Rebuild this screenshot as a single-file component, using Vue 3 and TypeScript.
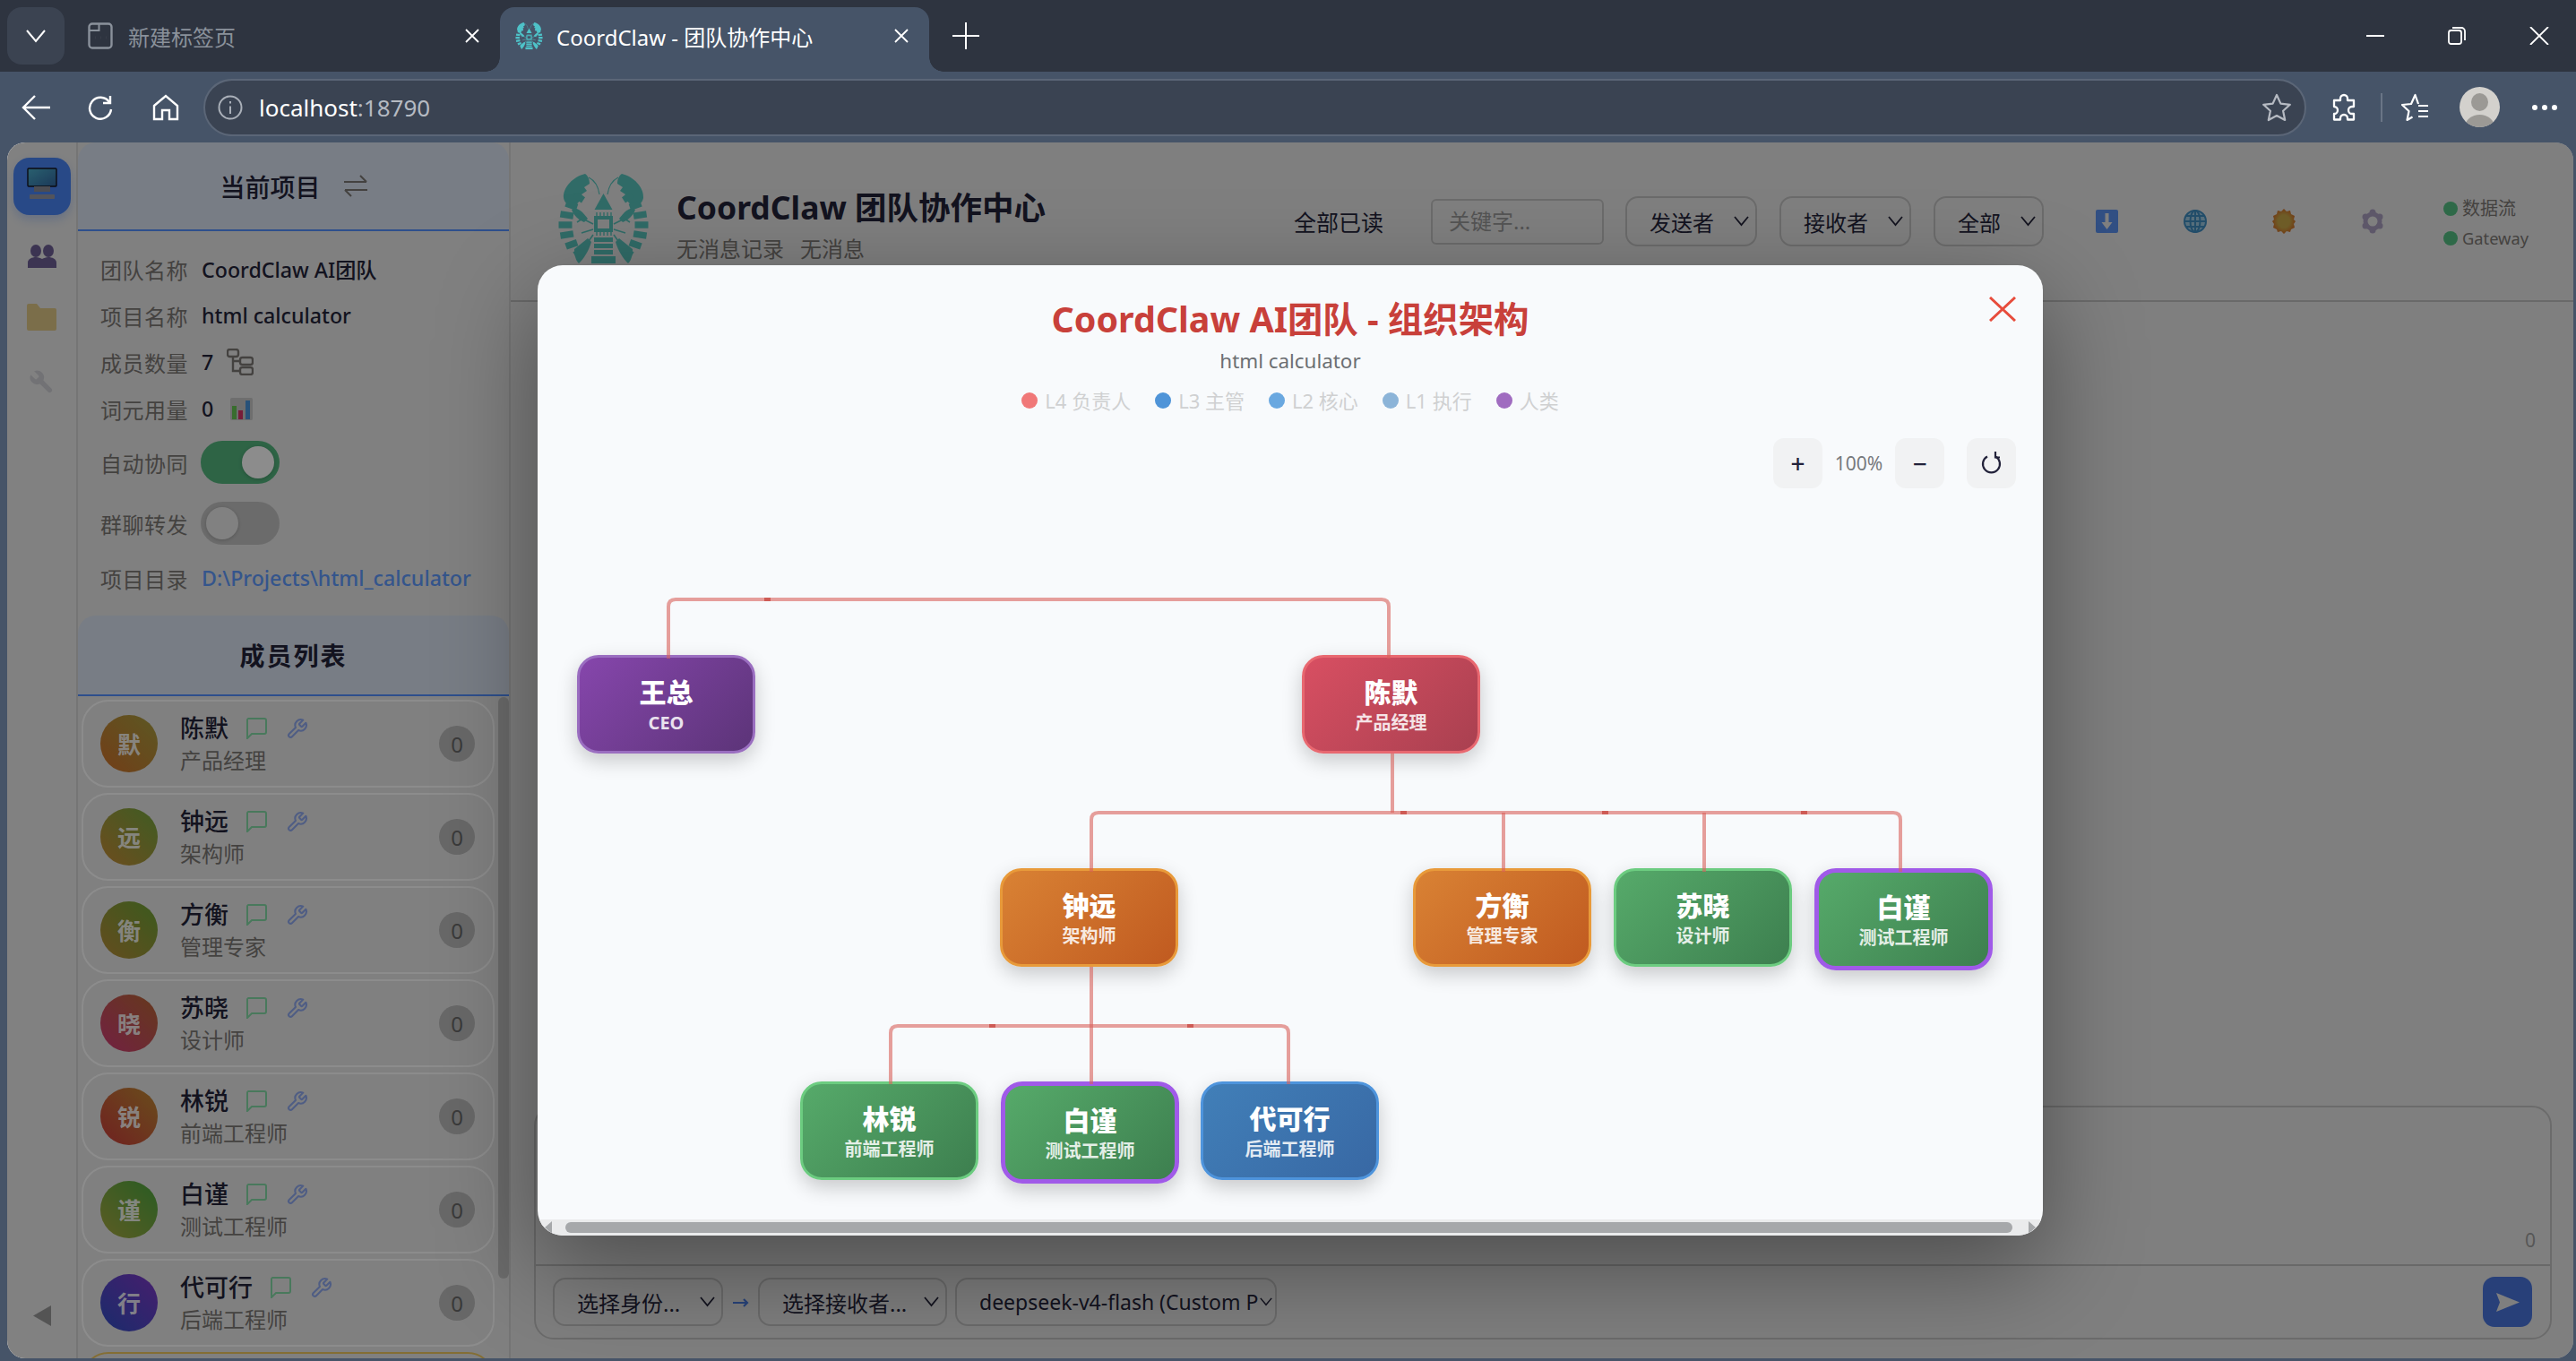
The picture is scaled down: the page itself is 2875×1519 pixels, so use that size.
<script setup lang="ts">
interface Member { name: string; role: string; initial: string; from: string; to: string }
interface OrgNode { name: string; role: string; x: number; y: number; kind: string; tester?: boolean }

const members: Member[] = [
  { name: '陈默', role: '产品经理', initial: '默', from: '#d0702c', to: '#a8a040' },
  { name: '钟远', role: '架构师', initial: '远', from: '#c88c38', to: '#74a840' },
  { name: '方衡', role: '管理专家', initial: '衡', from: '#b88c38', to: '#6ca438' },
  { name: '苏晓', role: '设计师', initial: '晓', from: '#d03c78', to: '#b86834' },
  { name: '林锐', role: '前端工程师', initial: '锐', from: '#cc3c3c', to: '#c08c34' },
  { name: '白谨', role: '测试工程师', initial: '谨', from: '#a8a840', to: '#4ca840' },
  { name: '代可行', role: '后端工程师', initial: '行', from: '#3050c4', to: '#8038c8' },
  { name: '', role: '', initial: '', from: '#fff', to: '#fff' },
]

const legend = [
  { label: 'L4 负责人', color: '#f07878' },
  { label: 'L3 主管', color: '#4f94d8' },
  { label: 'L2 核心', color: '#6aa8e0' },
  { label: 'L1 执行', color: '#8cb4d8' },
  { label: '人类', color: '#a06cc0' },
]

// canvas coordinates, the chart is a free diagram
const nodes: OrgNode[] = [
  { name: '王总', role: 'CEO', x: 44, y: 252, kind: 'purple' },
  { name: '陈默', role: '产品经理', x: 853, y: 252, kind: 'red' },
  { name: '钟远', role: '架构师', x: 516, y: 490, kind: 'orange' },
  { name: '方衡', role: '管理专家', x: 977, y: 490, kind: 'orange' },
  { name: '苏晓', role: '设计师', x: 1201, y: 490, kind: 'green' },
  { name: '白谨', role: '测试工程师', x: 1425, y: 490, kind: 'green', tester: true },
  { name: '林锐', role: '前端工程师', x: 293, y: 728, kind: 'green' },
  { name: '白谨', role: '测试工程师', x: 517, y: 728, kind: 'green', tester: true },
  { name: '代可行', role: '后端工程师', x: 740, y: 728, kind: 'blue' },
]

const links = [
  'M146 256V198q0-8 8-8H942q8 0 8 8V256',
  'M954 362V428',
  'M618 494V436q0-8 8-8H1513q8 0 8 8V494',
  'M1078 428V494',
  'M1302 428V494',
  'M618 600V731',
  'M394 731V674q0-8 8-8H830q8 0 8 8V731',
]
const marks = [
  { x: 253, y: 188 }, { x: 963, y: 426 }, { x: 1188, y: 426 },
  { x: 1410, y: 426 }, { x: 504, y: 664 }, { x: 725, y: 664 },
]

const headSelects = [
  { label: '发送者', cls: 'sel-head' },
  { label: '接收者', cls: 'sel-head' },
  { label: '全部', cls: 'sel-head sel-short' },
]

// lobster side plates, drawn on the left half and mirrored
const plates = [-50, -33, -16, 0, 16, 33, 50].map((deg) => {
  const a = (deg * Math.PI) / 180
  const x1 = 51.5 - 35 * Math.cos(a)
  const y1 = 57 + 36 * Math.sin(a)
  const x2 = 51.5 - 50 * Math.cos(a)
  const y2 = 57 + 44 * Math.sin(a)
  return `M${x1.toFixed(1)} ${y1.toFixed(1)}L${x2.toFixed(1)} ${y2.toFixed(1)}`
})
const sides = ['', 'matrix(-1 0 0 1 103 0)']
</script>

<template>
  <div class="browser">
    <svg class="defs" width="0" height="0">
      <symbol id="lobster" viewBox="0 0 103 103">
        <g v-for="(t, i) in sides" :key="i" :transform="t">
          <path d="M31 0C18 3 6 15 7 27c1 6 6 9 13 9 4-5 7-8 10-10l-3-3 6-4-3-4 6-4c0-5-2-9-5-11z" fill="currentColor" />
          <path d="M35 4c8 4 11 12 12 19" fill="none" stroke="currentColor" stroke-width="1.2" />
          <path d="M16 40c6-4 12 2 18 10l-4 4c-6-2-12-8-14-14z" fill="currentColor" />
          <path v-for="(p, j) in plates" :key="j" :d="p" fill="none" stroke="currentColor" stroke-width="7.5" />
          <path d="M40 56 28 50l-6 4M40 62l-13 4M40 68l-7 10" fill="none" stroke="currentColor" stroke-width="1.6" />
          <path d="M19 84l15-12 4 4c-3 10-8 18-14 24-4-4-5-10-5-16z" fill="currentColor" />
        </g>
        <path d="M51.5 22l10 18h-20z" fill="currentColor" />
        <path d="M41 47h21v18H41zM45 51v10h13V51z" fill="currentColor" fill-rule="evenodd" />
        <path d="M44 43v4M48 43v4M52 43v4M56 43v4M60 43v4M44 65v4M48 65v4M52 65v4M56 65v4M60 65v4" stroke="currentColor" stroke-width="1.4" />
        <rect x="41" y="71" width="21" height="5" fill="currentColor" />
        <rect x="41" y="78" width="21" height="5" fill="currentColor" />
        <rect x="41" y="85" width="21" height="5" fill="currentColor" />
        <rect x="38" y="92" width="27" height="8" fill="currentColor" />
      </symbol>
    </svg>

    <!-- Tab strip -->
    <div class="tabstrip">
      <div class="tab-menu">
        <svg width="26" height="16" viewBox="0 0 26 16" fill="none" stroke="#fff" stroke-width="2"><path d="M3 2l10 12L23 2" /></svg>
      </div>
      <div class="tab">
        <svg width="28" height="30" viewBox="0 0 28 30" fill="none" stroke="#8a919b" stroke-width="2.4">
          <path d="M5 1.5h18a3.5 3.5 0 0 1 3.500 3.500v20a3.500 3.500 0 0 1-3.500 3.500H5A3.500 3.500 0 0 1 1.500 25V5A3.500 3.500 0 0 1 5 1.500z" />
          <path d="M1.500 9h11V1.500" stroke-width="2" />
          <path d="M8 17h.1M14 17h.1M20 17h.1" stroke-width="3.2" />
        </svg>
        <span class="tab-title">新建标签页</span>
        <svg class="tab-close" width="16" height="16" viewBox="0 0 16 16" stroke="#fff" stroke-width="1.8"><path d="M1 1l14 14M15 1L1 15" /></svg>
      </div>
      <div class="tab active">
        <svg class="favicon" width="31" height="31"><use href="#lobster" /></svg>
        <span class="tab-title">CoordClaw - 团队协作中心</span>
        <svg class="tab-close" width="16" height="16" viewBox="0 0 16 16" stroke="#fff" stroke-width="1.8"><path d="M1 1l14 14M15 1L1 15" /></svg>
      </div>
      <svg class="new-tab" width="30" height="30" viewBox="0 0 30 30" stroke="#fff" stroke-width="2"><path d="M15 0v30M0 15h30" /></svg>
      <div class="win-controls">
        <svg width="20" height="20" viewBox="0 0 20 20" stroke="#fff" stroke-width="2"><path d="M0 10h20" /></svg>
        <svg width="20" height="20" viewBox="0 0 20 20" fill="none" stroke="#fff" stroke-width="1.8"><rect x="1" y="4" width="14" height="15" rx="2.500" /><path d="M5 1h10a4 4 0 0 1 4 4v10" /></svg>
        <svg width="22" height="20" viewBox="0 0 22 20" stroke="#fff" stroke-width="1.8"><path d="M1 0l20 20M21 0L1 20" /></svg>
      </div>
    </div>

    <!-- Toolbar -->
    <div class="toolbar">
      <svg class="tb-back" width="32" height="28" viewBox="0 0 32 28" fill="none" stroke="#fff" stroke-width="2.4"><path d="M32 14H2M15 1L2 14l13 13" /></svg>
      <svg class="tb-reload" width="28" height="28" viewBox="0 0 28 28" fill="none" stroke="#fff" stroke-width="2.4"><path d="M24 8A12 12 0 1 0 26 16" /><path d="M25 1v8h-8" /></svg>
      <svg class="tb-home" width="30" height="30" viewBox="0 0 30 30" fill="none" stroke="#fff" stroke-width="2.4"><path d="M2 13L15 2l13 11v15H19V18h-8v10H2z" /></svg>
      <div class="address">
        <svg width="28" height="28" viewBox="0 0 28 28" fill="none" stroke="#aab0b9" stroke-width="2"><circle cx="14" cy="14" r="12.500" /><path d="M14 12.500V21" /><path d="M14 7v2.600" /></svg>
        <span class="url">localhost<span class="url-port">:18790</span></span>
        <svg class="addr-star" width="34" height="32" viewBox="0 0 34 32" fill="none" stroke="#b5bac2" stroke-width="2.2" stroke-linejoin="round"><path d="M17 2l4.400 9.600 10.400 1.200-7.700 7 2.100 10.200L17 25l-9.200 5 2.100-10.200-7.700-7 10.400-1.200z" /></svg>
      </div>
      <svg class="tb-puzzle" width="28" height="31" viewBox="0 0 28 31" fill="none" stroke="#fff" stroke-width="2.3" stroke-linejoin="round">
        <path d="M10 6a4 4 0 0 1 8 0v2h7v7h-2a4 4 0 0 0 0 8h2v6.500H18V28a4 4 0 0 0-8 0v1.500H3V23a4 4 0 0 0 0-8V8h7z" />
      </svg>
      <div class="tb-divider"></div>
      <svg class="tb-fav" width="32" height="32" viewBox="0 0 32 32" fill="none" stroke="#fff" stroke-width="2.2" stroke-linejoin="round">
        <path d="M20 12l-3.500-10L12 12 2 13l7.500 7-2 10 6-3.500" />
        <path d="M20 14h11M20 20h11M20 26h11" />
      </svg>
      <svg class="tb-avatar" width="45" height="45" viewBox="0 0 45 45">
        <clipPath id="avatarClip"><circle cx="22.500" cy="22.500" r="22.500" /></clipPath>
        <circle cx="22.500" cy="22.500" r="22.500" fill="#d3d1cd" />
        <g clip-path="url(#avatarClip)" fill="#9b9995">
          <ellipse cx="22.500" cy="17" rx="9.500" ry="10" />
          <ellipse cx="22.500" cy="44" rx="16" ry="13" />
        </g>
      </svg>
      <div class="tb-dots"><i></i><i></i><i></i></div>
    </div>

    <!-- Page -->
    <div class="page">
      <nav class="rail">
        <div class="rail-item rail-active">
          <svg width="34" height="42" viewBox="0 0 34 42">
            <defs><linearGradient id="screen" x1="0" y1="0" x2="1" y2="1"><stop offset="0" stop-color="#4cb0cc" /><stop offset="1" stop-color="#3266a0" /></linearGradient></defs>
            <rect x="1" y="1" width="32" height="20" rx="1" fill="url(#screen)" stroke="#14141f" stroke-width="1.400" />
            <rect x="8" y="21" width="18" height="6" fill="#8a8c98" />
            <rect x="3" y="30" width="28" height="5" rx="1" fill="#989aa6" />
          </svg>
        </div>
        <div class="rail-item rail-dim">
          <svg width="32" height="26" viewBox="0 0 32 26" fill="#6e5f96">
            <ellipse cx="9" cy="7" rx="6" ry="7" /><ellipse cx="23" cy="7" rx="6" ry="7" />
            <path d="M0 26v-6c0-4 5-6 9-6 3 0 5 1 7 2 2-1 4-2 7-2 4 0 9 2 9 6v6z" />
          </svg>
        </div>
        <div class="rail-item rail-dim">
          <svg width="33" height="30" viewBox="0 0 33 30"><path d="M0 2a2 2 0 0 1 2-2h9l4 5h16a2 2 0 0 1 2 2v21a2 2 0 0 1-2 2H2a2 2 0 0 1-2-2z" fill="#e0c888" /></svg>
        </div>
        <div class="rail-item rail-faint">
          <svg width="31" height="31" viewBox="0 0 24 24" fill="#cfd0d6"><path transform="matrix(-1 0 0 1 24 0)" d="M14.700 6.300a1 1 0 0 0 0 1.400l1.600 1.600a1 1 0 0 0 1.400 0l3.770-3.770a6 6 0 0 1-7.940 7.940l-6.910 6.910a2.120 2.120 0 0 1-3-3l6.910-6.910a6 6 0 0 1 7.940-7.940l-3.760 3.760z" /></svg>
        </div>
        <svg class="rail-collapse" width="20" height="23" viewBox="0 0 20 23"><path d="M20 0v23L0 11.500z" fill="#9a9a9a" /></svg>
      </nav>

      <aside class="sidebar">
        <header class="side-head">
          <span>当前项目</span>
          <svg width="26" height="25" viewBox="0 0 26 25" fill="none" stroke="#7d7975" stroke-width="2"><path d="M0 8h25M18 1l7 7M26 17H1M8 24l-7-7" /></svg>
        </header>
        <section class="info">
          <div class="info-row"><label>团队名称</label><span>CoordClaw AI团队</span></div>
          <div class="info-row"><label>项目名称</label><span>html calculator</span></div>
          <div class="info-row">
            <label>成员数量</label><span>7</span>
            <svg class="info-icon" width="30" height="30" viewBox="0 0 30 30" fill="none" stroke="#7d7975" stroke-width="2.400">
              <rect x="1" y="1" width="12" height="8" rx="2.500" /><rect x="15" y="10" width="14" height="8" rx="2.500" /><rect x="15" y="21" width="14" height="8" rx="2.500" />
              <path d="M7 9v16h8M7 14h8" />
            </svg>
          </div>
          <div class="info-row">
            <label>词元用量</label><span>0</span>
            <svg class="info-icon bars" width="25" height="25" viewBox="0 0 25 25">
              <rect width="25" height="25" rx="2" fill="#c8c8c8" />
              <rect x="2" y="9" width="5" height="15" fill="#66c654" /><rect x="9" y="14" width="5" height="10" fill="#d83468" /><rect x="17" y="3" width="5" height="21" fill="#4a96dc" />
            </svg>
          </div>
          <div class="info-row toggle-row first">
            <label>自动协同</label><div class="toggle on"><i></i></div>
          </div>
          <div class="info-row toggle-row second">
            <label>群聊转发</label><div class="toggle"><i></i></div>
          </div>
          <div class="info-row"><label>项目目录</label><span class="link">D:\Projects\html_calculator</span></div>
        </section>
        <header class="side-head members-head"><span>成员列表</span></header>
        <div class="member-list">
          <div class="cards">
            <div v-for="(m, i) in members" :key="i" class="card" :class="{ 'card-next': !m.name }">
              <template v-if="m.name">
                <div class="avatar" :style="{ background: `linear-gradient(45deg, ${m.from}, ${m.to})` }">{{ m.initial }}</div>
                <div class="card-text">
                  <div class="card-name">
                    <span>{{ m.name }}</span>
                    <svg class="ic-chat" width="24" height="24" viewBox="0 0 24 24" fill="none" stroke="#86dca8" stroke-width="2"><path d="M3 1h18a2 2 0 0 1 2 2v13a2 2 0 0 1-2 2H7l-5 5V3a2 2 0 0 1 1-2z" /></svg>
                    <svg class="ic-wrench" width="25" height="25" viewBox="0 0 24 24" fill="none" stroke="#90aaf0" stroke-width="2" stroke-linejoin="round"><path d="M14.700 6.300a1 1 0 0 0 0 1.400l1.600 1.600a1 1 0 0 0 1.400 0l3.770-3.770a6 6 0 0 1-7.940 7.940l-6.910 6.910a2.120 2.120 0 0 1-3-3l6.910-6.910a6 6 0 0 1 7.940-7.940l-3.760 3.760z" /></svg>
                  </div>
                  <div class="card-role">{{ m.role }}</div>
                </div>
                <div class="badge">0</div>
              </template>
            </div>
          </div>
          <div class="list-thumb"></div>
        </div>
      </aside>

      <main class="main">
        <header class="main-head">
          <svg class="logo" width="103" height="103"><use href="#lobster" /></svg>
          <div class="head-title">
            <h1>CoordClaw 团队协作中心</h1>
            <p><span>无消息记录</span><span>无消息</span></p>
          </div>
          <div class="head-tools">
            <span class="read-all">全部已读</span>
            <div class="search">关键字...</div>
            <div v-for="s in headSelects" :key="s.label" class="select" :class="s.cls">
              <span>{{ s.label }}</span>
              <svg width="17" height="12" viewBox="0 0 17 12" fill="none" stroke="#24243a" stroke-width="1.800"><path d="M1 1l7.500 9L16 1" /></svg>
            </div>
            <div class="tool-icons">
              <svg width="25" height="26" viewBox="0 0 25 26">
                <rect width="25" height="26" rx="2" fill="#5a90ee" />
                <path d="M10.500 4h4v10h4l-6 8-6-8h4z" fill="#e8e8e8" />
              </svg>
              <svg width="26" height="26" viewBox="0 0 26 26" fill="none" stroke="#3f8cc0" stroke-width="2">
                <circle cx="13" cy="13" r="12" fill="#9dc8e0" /><ellipse cx="13" cy="13" rx="5.500" ry="12" /><path d="M13 1v24M1 13h24M3 7h20M3 19h20" />
              </svg>
              <svg width="26" height="28" viewBox="0 0 26 28">
                <defs><radialGradient id="sunCore"><stop offset="0.500" stop-color="#c8a848" /><stop offset="1" stop-color="#d07028" /></radialGradient></defs>
                <path d="M13 0l3 3 4-1 1 4 4 2-1 4 2 2-2 3 1 4-4 2-1 3-4-1-3 3-3-3-4 1-1-3-4-2 1-4-2-3 2-2-1-4 4-2 1-4 4 1z" fill="url(#sunCore)" />
              </svg>
              <svg width="26" height="28" viewBox="0 0 26 28" fill="#aa9fc0">
                <circle cx="13" cy="14" r="8" fill="none" stroke="#aa9fc0" stroke-width="5" />
                <circle cx="13" cy="4" r="3.500" /><circle cx="13" cy="24" r="3.500" /><circle cx="5" cy="9" r="3.500" /><circle cx="21" cy="9" r="3.500" /><circle cx="5" cy="19" r="3.500" /><circle cx="21" cy="19" r="3.500" />
              </svg>
            </div>
            <div class="status">
              <div><i></i>数据流</div>
              <div><i></i><span class="gw">Gateway</span></div>
            </div>
          </div>
        </header>
        <div class="messages"></div>
        <section class="composer">
          <div class="composer-input"><span>0</span></div>
          <div class="composer-bar">
            <div class="select sel-bar sel-who"><span>选择身份...</span><svg width="17" height="12" viewBox="0 0 17 12" fill="none" stroke="#24243a" stroke-width="1.800"><path d="M1 1l7.500 9L16 1" /></svg></div>
            <svg class="bar-arrow" width="18" height="12" viewBox="0 0 18 12" fill="none" stroke="#4a7ce0" stroke-width="2.200"><path d="M0 6h16M12 2l4 4-4 4" /></svg>
            <div class="select sel-bar sel-to"><span>选择接收者...</span><svg width="17" height="12" viewBox="0 0 17 12" fill="none" stroke="#24243a" stroke-width="1.800"><path d="M1 1l7.500 9L16 1" /></svg></div>
            <div class="select sel-bar sel-model"><span>deepseek-v4-flash (Custom P</span><svg width="14" height="12" viewBox="0 0 17 12" fill="none" stroke="#24243a" stroke-width="1.800"><path d="M1 1l7.500 9L16 1" /></svg></div>
            <div class="send">
              <svg width="26" height="21" viewBox="0 0 26 21"><path d="M0 0l26 10.500L0 21l4-10.500z" fill="#e8e8e8" /></svg>
            </div>
          </div>
        </section>
      </main>

      <!-- Org chart dialog -->
      <div class="overlay">
        <div class="modal">
          <svg class="modal-close" width="30" height="28" viewBox="0 0 30 28" stroke="#e74c3c" stroke-width="3"><path d="M1 1l28 26M29 1L1 27" /></svg>
          <div class="modal-head">
            <h2>CoordClaw AI团队 - 组织架构</h2>
            <div class="modal-sub">html calculator</div>
            <div class="legend">
              <span v-for="l in legend" :key="l.label"><i :style="{ background: l.color }"></i>{{ l.label }}</span>
            </div>
          </div>
          <div class="chart">
            <div class="zoom-bar">
              <div class="zoom-btn">+</div>
              <span class="zoom-val">100%</span>
              <div class="zoom-btn">−</div>
              <div class="zoom-btn zoom-reset">
                <svg width="24" height="26" viewBox="0 0 24 26" fill="none" stroke="#22223a" stroke-width="2.200"><path d="M16 5.500a9.500 9.500 0 1 1-9 0" /><path d="M16 0v6.500h5" /></svg>
              </div>
            </div>
            <div
              v-for="(n, i) in nodes"
              :key="i"
              class="node"
              :class="[n.kind, { tester: n.tester }]"
              :style="{ left: n.x + 'px', top: n.y + 'px' }"
            >
              <div class="node-name">{{ n.name }}</div>
              <div class="node-role">{{ n.role }}</div>
            </div>
            <svg class="links" width="1680" height="882" viewBox="0 0 1680 882" fill="none">
              <path v-for="(d, i) in links" :key="i" :d="d" stroke="#d8605a" stroke-opacity="0.6" stroke-width="4" />
              <rect v-for="(m, i) in marks" :key="i" :x="m.x" :y="m.y" width="7" height="4" fill="#c84a44" fill-opacity="0.8" />
            </svg>
          </div>
          <div class="hscroll">
            <svg width="8" height="14" viewBox="0 0 8 14"><path d="M8 0v14L0 7z" fill="#a6a8aa" /></svg>
            <div class="hthumb"></div>
            <svg width="8" height="14" viewBox="0 0 8 14"><path d="M0 0v14l8-7z" fill="#a6a8aa" /></svg>
          </div>
        </div>
      </div>
    </div>
  </div>
</template>

<style scoped>
.browser {
  width: 2875px;
  height: 1519px;
  display: flex;
  flex-direction: column;
  background: #465468;
  overflow: hidden;
  font-family: "Noto Sans", "Noto Sans CJK SC", sans-serif;
  color: #24243a;
}
.defs { position: absolute; }

/* ===== Tabs ===== */
.tabstrip {
  height: 80px;
  flex: none;
  display: flex;
  align-items: flex-end;
  background: #2e3440;
  padding-left: 8px;
}
.tab-menu {
  width: 64px;
  height: 64px;
  margin: 0 8px 8px 0;
  border-radius: 16px;
  background: #3b4351;
  display: flex;
  align-items: center;
  justify-content: center;
}
.tab {
  width: 478px;
  height: 72px;
  padding: 0 23px 8px 18px;
  box-sizing: border-box;
  display: flex;
  align-items: center;
  font-size: 24px;
  color: #8a919b;
}
.tab-title { flex: 1; margin-left: 17px; white-space: nowrap; }
.tab.active {
  width: 479px;
  border-radius: 16px 16px 0 0;
  background: #465468;
  color: #fff;
  position: relative;
  padding-left: 17px;
}
.tab.active .tab-title { margin-left: 15px; }
.tab.active::before,
.tab.active::after {
  content: "";
  position: absolute;
  bottom: 0;
  width: 16px;
  height: 16px;
}
.tab.active::before { left: -16px; background: radial-gradient(circle at 0 0, transparent 15.500px, #465468 16px); }
.tab.active::after { right: -16px; background: radial-gradient(circle at 100% 0, transparent 15.500px, #465468 16px); }
.favicon { color: #4ec2c8; flex: none; }
.new-tab { margin: 0 0 25px 26px; }
.win-controls {
  margin-left: auto;
  height: 80px;
  padding-right: 30px;
  display: flex;
  align-items: center;
  gap: 71px;
}

/* ===== Toolbar ===== */
.toolbar {
  height: 79px;
  flex: none;
  padding: 0 0 0 24px;
  box-sizing: border-box;
  display: flex;
  align-items: center;
}
.tb-reload { margin-left: 42px; }
.tb-home { margin-left: 44px; }
.address {
  width: 2347px;
  height: 64px;
  margin-left: 27px;
  padding: 0 14px;
  box-sizing: border-box;
  border: 2px solid #5b6677;
  border-radius: 32px;
  background: #3a4352;
  display: flex;
  align-items: center;
}
.url { margin-left: 18px; font-size: 26px; color: #fff; }
.url-port { color: #b5bac2; }
.addr-star { margin-left: auto; }
.tb-puzzle { margin-left: 28px; }
.tb-divider { width: 2px; height: 32px; margin-left: 27px; background: #6a7586; }
.tb-fav { margin-left: 20px; }
.tb-avatar { margin-left: 34px; }
.tb-dots { margin-left: 36px; display: flex; gap: 5px; }
.tb-dots i { width: 6px; height: 6px; border-radius: 50%; background: #fff; }

/* ===== Page ===== */
.page {
  flex: 1;
  min-height: 0;
  margin: 0 3px 3px 8px;
  border-radius: 20px;
  background: #e8e8e8;
  display: flex;
  overflow: hidden;
  position: relative;
}
.rail {
  width: 79px;
  flex: none;
  padding: 17px 0 36px;
  box-sizing: border-box;
  border-right: 2px solid #d6d6d6;
  background: #ececec;
  display: flex;
  flex-direction: column;
  align-items: center;
}
.rail-item {
  width: 64px;
  height: 64px;
  margin-bottom: 4px;
  border-radius: 18px;
  display: flex;
  align-items: center;
  justify-content: center;
}
.rail-active { margin-bottom: 14px; background: #4a86f6; box-shadow: 0 5px 12px rgba(74, 134, 246, 0.3); }
.rail-faint { margin-top: 4px; }
.rail-collapse { margin-top: auto; }

/* ===== Sidebar ===== */
.sidebar {
  width: 483px;
  flex: none;
  border-right: 2px solid #d6d6d6;
  box-sizing: border-box;
  background: #e9e9e9;
  display: flex;
  flex-direction: column;
}
.side-head {
  height: 99px;
  flex: none;
  box-sizing: border-box;
  border-bottom: 2px solid #5590ff;
  border-radius: 20px 20px 0 0;
  background: #dae3f2;
  display: flex;
  align-items: center;
  justify-content: center;
  gap: 26px;
  font-size: 28px;
  font-weight: 500;
  color: #24243a;
}
.members-head {
  height: 90px;
  font-weight: 700;
  letter-spacing: 2px;
}
.info { padding: 16px 0 16px 25px; font-size: 23.200px; font-weight: 500; }
.info-row { height: 52px; display: flex; align-items: center; white-space: nowrap; }
.info-row label { width: 112px; flex: none; color: #7d7975; font-size: 24px; font-weight: 400; letter-spacing: 0.5px; }
.info-row span { margin-left: 1px; }
.info-icon { margin-left: 15px; }
.info-icon.bars { margin-left: 19px; }
.toggle-row { height: 48px; }
.toggle-row.first { margin: 10px 0 20px; }
.toggle-row.second { margin-bottom: 11px; }
.toggle {
  width: 88px;
  height: 48px;
  border-radius: 24px;
  background: #c4c4c4;
  padding: 6px;
  box-sizing: border-box;
  display: flex;
}
.toggle i { width: 36px; height: 36px; border-radius: 50%; background: #ececec; box-shadow: 0 1px 4px rgba(0, 0, 0, 0.2); }
.toggle.on { background: #54b67f; justify-content: flex-end; }
.toggle.on i { background: #fff; }
.link { color: #5f9bff; }

.member-list {
  flex: 1;
  min-height: 0;
  overflow: hidden;
  padding-left: 4px;
  display: flex;
  gap: 4px;
}
.cards { width: 462px; padding-top: 4px; display: flex; flex-direction: column; gap: 6px; }
.card {
  height: 98px;
  flex: none;
  box-sizing: border-box;
  border: 2px solid #fff;
  border-radius: 30px;
  padding-left: 19px;
  display: flex;
  align-items: center;
}
.card-next { border-color: #f0c860; }
.avatar {
  width: 64px;
  height: 64px;
  flex: none;
  border-radius: 50%;
  color: rgba(255, 255, 255, 0.9);
  font-size: 26px;
  font-weight: 700;
  display: flex;
  align-items: center;
  justify-content: center;
}
.card-text { margin-left: 25px; flex: 1; }
.card-name { height: 36px; display: flex; align-items: center; font-size: 27px; font-weight: 500; line-height: 36px; }
.ic-chat { margin-left: 19px; }
.ic-wrench { margin-left: 21px; }
.card-role { margin-top: 1px; font-size: 24px; line-height: 33px; color: #7d7975; }
.badge {
  width: 40px;
  height: 40px;
  margin-right: 20px;
  border-radius: 50%;
  background: #bdbdbd;
  color: #6a6a6a;
  font-size: 24px;
  display: flex;
  align-items: center;
  justify-content: center;
}
.list-thumb { width: 12px; height: 649px; margin-top: 1px; border-radius: 6px; background: #c4c4c4; }

/* ===== Main ===== */
.main { flex: 1; min-width: 0; display: flex; flex-direction: column; }
.main-head {
  height: 178px;
  flex: none;
  box-sizing: border-box;
  border-bottom: 2px solid #c0c0c0;
  padding: 0 27px 0 52px;
  display: flex;
  align-items: center;
}
.logo { color: #58c4bc; align-self: flex-start; margin-top: 35px; flex: none; }
.head-title { margin: 6px 0 0 30px; white-space: nowrap; }
.head-title h1 { margin: 0; font-size: 35.500px; line-height: 50px; font-weight: 700; color: #24243a; }
.head-title p { margin: 5px 0 0; font-size: 24px; line-height: 34px; color: #7d7975; display: flex; gap: 18px; }
.head-tools { margin-left: auto; display: flex; align-items: center; }
.read-all { width: 102px; font-size: 25px; margin-right: 51px; white-space: nowrap; }
.search {
  width: 193px;
  height: 51px;
  margin-right: 24px;
  box-sizing: border-box;
  border: 2px solid #c4c4c4;
  border-radius: 6px;
  padding-left: 18px;
  font-size: 24px;
  line-height: 46px;
  color: #9a9a9a;
}
.select {
  box-sizing: border-box;
  border: 2px solid #c4c4c4;
  border-radius: 14px;
  display: flex;
  align-items: center;
  justify-content: space-between;
  font-size: 24px;
  white-space: nowrap;
}
.sel-head { width: 147px; height: 56px; padding: 0 7px 0 25px; margin-right: 25px; }
.sel-short { width: 123px; margin-right: 0; }
.tool-icons {
  width: 394px;
  margin-left: 22px;
  display: flex;
  align-items: center;
  justify-content: space-around;
}
.status { margin-left: 30px; width: 118px; margin-top: 4px; font-size: 20px; line-height: 33px; color: #7d7975; }
.status div { display: flex; align-items: center; }
.status i { width: 16px; height: 16px; margin-right: 5px; border-radius: 50%; background: #54c084; }
.gw { font-size: 18.300px; }

.messages { flex: 1; }
.composer {
  height: 261px;
  flex: none;
  margin: 0 24px 21px 26px;
  box-sizing: border-box;
  border: 2px solid #c4c4c4;
  border-radius: 22px;
  display: flex;
  flex-direction: column;
}
.composer-input {
  flex: 1;
  border-bottom: 2px solid #c0c0c0;
  display: flex;
  align-items: flex-end;
  justify-content: flex-end;
  padding: 0 16px 13px 0;
  font-size: 21px;
  color: #9e9e9e;
}
.composer-bar {
  height: 80px;
  flex: none;
  box-sizing: border-box;
  padding: 0 20px 0 19px;
  display: flex;
  align-items: center;
}
.sel-bar { height: 54px; padding: 0 7px 0 25px; }
.sel-who { width: 190px; }
.sel-to { width: 211px; margin-left: 0; }
.sel-model { width: 359px; margin-left: 9px; padding-right: 3px; font-size: 23px; }
.bar-arrow { margin: 2px 10px 0 11px; flex: none; }
.send {
  width: 55px;
  height: 56px;
  margin-left: auto;
  border-radius: 13px;
  background: #4a76dc;
  display: flex;
  align-items: center;
  justify-content: center;
}

/* ===== Dialog ===== */
.overlay {
  position: absolute;
  inset: 0;
  background: rgba(0, 0, 0, 0.45);
  display: flex;
  align-items: center;
  justify-content: center;
}
.modal {
  width: 1680px;
  height: 1083px;
  border-radius: 28px;
  background: #f8fafc;
  box-shadow: 0 36px 110px rgba(0, 0, 0, 0.4);
  display: flex;
  flex-direction: column;
  overflow: hidden;
  position: relative;
}
.modal-close { position: absolute; top: 35px; right: 30px; z-index: 2; }
.modal-head { height: 183px; flex: none; padding-top: 35px; box-sizing: border-box; text-align: center; }
.modal-head h2 { margin: 0; font-size: 39.400px; line-height: 50px; font-weight: 700; color: #c8403a; }
.modal-sub { margin-top: 6px; font-size: 22.400px; line-height: 32px; color: #6c6f73; }
.legend {
  margin-top: 12px;
  display: flex;
  justify-content: center;
  gap: 27px;
  font-size: 22px;
  line-height: 32px;
  color: #cfd0d1;
}
.legend span { display: flex; align-items: center; }
.legend i { width: 18px; height: 18px; margin-right: 8px; border-radius: 50%; }

.chart { flex: 1; min-height: 0; position: relative; }
.links { position: absolute; top: 0; left: 0; pointer-events: none; }
.zoom-bar {
  position: absolute;
  top: 0;
  right: 20px;
  padding: 10px 10px 8px 12px;
  border-radius: 12px;
  display: flex;
  align-items: center;
}
.zoom-btn {
  width: 55px;
  height: 56px;
  border-radius: 12px;
  background: #f1f2f3;
  font-size: 28px;
  font-weight: 500;
  color: #22223a;
  display: flex;
  align-items: center;
  justify-content: center;
}
.zoom-val { width: 81px; text-align: center; font-size: 21px; color: #77797c; }
.zoom-reset { margin-left: 25px; }
.node {
  position: absolute;
  width: 199px;
  height: 110px;
  box-sizing: border-box;
  border: 3px solid;
  border-radius: 24px;
  display: flex;
  flex-direction: column;
  align-items: center;
  justify-content: center;
  color: #fff;
  box-shadow: 0 8px 22px rgba(0, 0, 0, 0.2);
}
.node.tester { height: 114px; border: 5px solid #a05ae8; }
.node-name { font-size: 30px; line-height: 40px; font-weight: 900; }
.node-role { font-size: 20px; line-height: 27px; font-weight: 700; opacity: 0.85; }
.purple { background: linear-gradient(135deg, #8646ac, #5c3478); border-color: #9a6ec0; }
.red { background: linear-gradient(135deg, #d84f62, #a94050); border-color: #e86870; }
.orange { background: linear-gradient(135deg, #d98234, #c05a20); border-color: #e89a3a; }
.green { background: linear-gradient(135deg, #56aa6a, #3d7f4f); border-color: #6ccc80; }
.blue { background: linear-gradient(135deg, #417fb8, #3868a4); border-color: #4e94dc; }

.hscroll {
  height: 18px;
  flex: none;
  background: #eaebec;
  padding: 0 8px;
  display: flex;
  align-items: center;
}
.hthumb { width: 1616px; height: 12px; margin: 0 18px 0 15px; border-radius: 6px; background: #a6a8aa; }
</style>

<style>
html, body { margin: 0; padding: 0; overflow: hidden; background: #465468; }
</style>
